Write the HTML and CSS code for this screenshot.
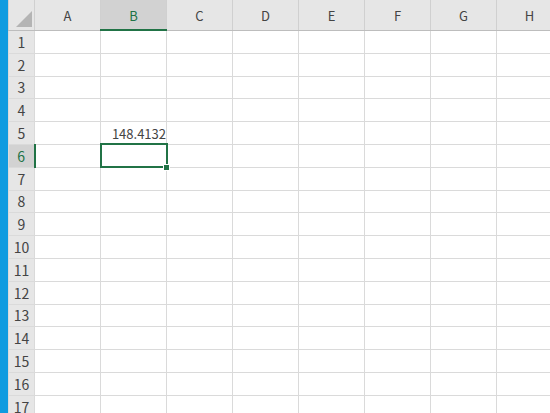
FILE: index.html
```html
<!DOCTYPE html>
<html lang="ja">
<head>
  <meta charset="UTF-8">
  <title>Book1</title>
  <link rel="stylesheet" href="styles.css">
</head>
<body>
<div class="window">
  <div class="edge"></div>
  <table class="sheet">
    <colgroup>
      <col class="rowhead-col">
      <col class="col"><col class="col"><col class="col"><col class="col">
      <col class="col"><col class="col"><col class="col"><col class="col">
    </colgroup>
    <tr class="colheads">
      <th class="corner"><span class="tri"></span></th>
      <th>A</th><th class="sel-col">B</th><th>C</th><th>D</th><th>E</th><th>F</th><th>G</th><th>H</th>
    </tr>
    <tr><th class="rh">1</th><td></td><td></td><td></td><td></td><td></td><td></td><td></td><td></td></tr>
    <tr><th class="rh">2</th><td></td><td></td><td></td><td></td><td></td><td></td><td></td><td></td></tr>
    <tr><th class="rh">3</th><td></td><td></td><td></td><td></td><td></td><td></td><td></td><td></td></tr>
    <tr><th class="rh">4</th><td></td><td></td><td></td><td></td><td></td><td></td><td></td><td></td></tr>
    <tr><th class="rh">5</th><td></td><td class="num">148.4132</td><td></td><td></td><td></td><td></td><td></td><td></td></tr>
    <tr><th class="rh sel-row">6</th><td></td><td class="active"></td><td></td><td></td><td></td><td></td><td></td><td></td></tr>
    <tr><th class="rh">7</th><td></td><td></td><td></td><td></td><td></td><td></td><td></td><td></td></tr>
    <tr><th class="rh">8</th><td></td><td></td><td></td><td></td><td></td><td></td><td></td><td></td></tr>
    <tr><th class="rh">9</th><td></td><td></td><td></td><td></td><td></td><td></td><td></td><td></td></tr>
    <tr><th class="rh">10</th><td></td><td></td><td></td><td></td><td></td><td></td><td></td><td></td></tr>
    <tr><th class="rh">11</th><td></td><td></td><td></td><td></td><td></td><td></td><td></td><td></td></tr>
    <tr><th class="rh">12</th><td></td><td></td><td></td><td></td><td></td><td></td><td></td><td></td></tr>
    <tr><th class="rh">13</th><td></td><td></td><td></td><td></td><td></td><td></td><td></td><td></td></tr>
    <tr><th class="rh">14</th><td></td><td></td><td></td><td></td><td></td><td></td><td></td><td></td></tr>
    <tr><th class="rh">15</th><td></td><td></td><td></td><td></td><td></td><td></td><td></td><td></td></tr>
    <tr><th class="rh">16</th><td></td><td></td><td></td><td></td><td></td><td></td><td></td><td></td></tr>
    <tr><th class="rh">17</th><td></td><td></td><td></td><td></td><td></td><td></td><td></td><td></td></tr>
  </table>
</div>
</body>
</html>
```

FILE: styles.css
```css
/* sheet view */
html, body {
  margin: 0;
  height: 100%;
  overflow: hidden;
  background: #ffffff;
}
.window {
  display: flex;
  height: 413px;
  overflow: hidden;
  font-family: "Noto Sans CJK JP", "Noto Sans", sans-serif;
  font-size: 13px;
  color: #444444;
}
.edge {
  flex: 0 0 8px;
  background: #0f9be0;
}
.sheet {
  border-collapse: collapse;
  table-layout: fixed;
  width: 554px;
  flex: 0 0 auto;
  align-self: flex-start;
}
.rowhead-col {
  width: 26px;
}
.col {
  width: 66px;
}
.sheet th,
.sheet td {
  padding: 0;
  height: 21.8px;
  border: 1px solid #dadada;
  line-height: 20px;
}
.colheads th {
  height: 27px;
  background: #e6e6e6;
  font-weight: normal;
  text-align: center;
  border-color: #d0d0d0;
  border-top: none;
  border-bottom: 1px solid #bdbdbd;
  padding-top: 2px;
}
.rh {
  background: #e6e6e6;
  font-weight: normal;
  text-align: center;
  border-color: #d0d0d0;
  border-left: none;
  border-right: 1px solid #bdbdbd;
  font-size: 14px;
}
.corner {
  position: relative;
  border-right: 1px solid #bdbdbd;
}
.tri {
  position: absolute;
  right: 2px;
  bottom: 3px;
  width: 0;
  height: 0;
  border-left: 16px solid transparent;
  border-bottom: 16px solid #b4b4b4;
}
.colheads .sel-col {
  background: #d2d2d2;
  color: #217346;
  border-bottom: 2px solid #217346;
}
.rh.sel-row {
  background: #d2d2d2;
  color: #217346;
  border-right: 2px solid #217346;
}
.num {
  text-align: right;
  padding-right: 3px;
  vertical-align: bottom;
}
.active {
  position: relative;
  outline: 2px solid #217346;
  outline-offset: -1px;
}
.active::after {
  content: "";
  position: absolute;
  right: -4px;
  bottom: -4px;
  width: 5px;
  height: 5px;
  background: #217346;
  border: 1px solid #ffffff;
}
```
